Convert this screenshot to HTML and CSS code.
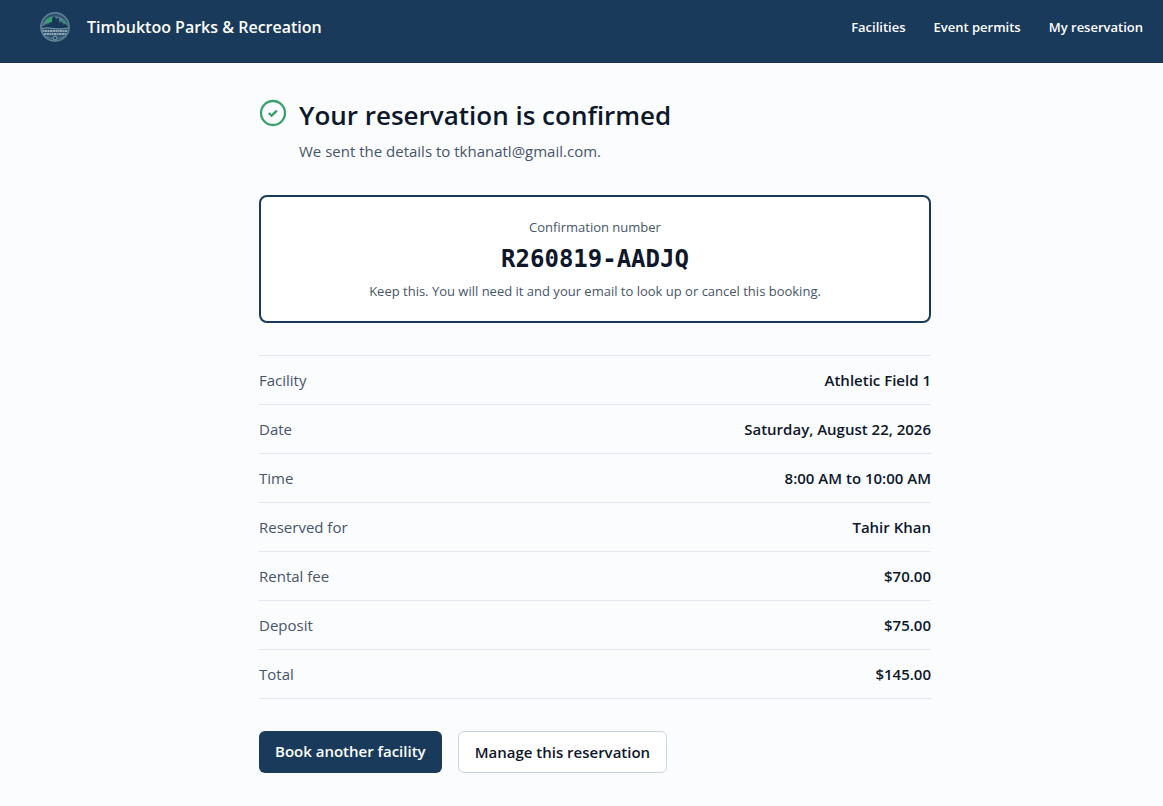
FILE: index.html
```html
<!DOCTYPE html>
<html lang="en">
<head>
  <meta charset="utf-8">
  <meta name="viewport" content="width=device-width, initial-scale=1">
  <title>Your reservation is confirmed</title>
  <link rel="stylesheet" href="styles.css">
</head>
<body>
  <header class="site-header">
    <a class="brand" href="#">
      <svg class="brand-logo" viewBox="0 0 60 60" aria-hidden="true">
        <circle cx="30" cy="30" r="30" fill="#55758f"/>
        <circle cx="30" cy="30" r="27" fill="#31536f"/>
        <path d="M4 28a27 27 0 0 1 52 0l-5-4-6-3-7-3-8-4-7 3-7 4-6 5z" fill="#5f8094"/>
        <path d="M13 16l6-5 7-2 1 5-4 6-6 3-5-1z" fill="#35a36d"/>
        <path d="M43 13l5 2 5 7-5 1-5-4z" fill="#348d70"/>
        <path d="M4 32l8-8 4 2 4-6 4 3V13l4-5 4 5 1 8v-9h5v11l5-4 3 7 5-2 5 8z" fill="#173856"/>
        <path d="M4 34c8-4 15-2 22-1s17 2 30-1" fill="none" stroke="#7f9cae" stroke-width="2"/>
        <path d="M5 38h50M8 44h44" fill="none" stroke="#8fa6b5" stroke-width="4" stroke-dasharray="4 1 5 1 3 1"/>
        <path d="M12 49q18 9 36 0" fill="none" stroke="#557a92" stroke-width="2"/>
        <circle cx="30" cy="52" r="4" fill="#24496a" stroke="#7f9cae" stroke-width="2"/>
        <circle cx="30" cy="30" r="28" fill="none" stroke="#64849a" stroke-width="2"/>
      </svg>
      <span>Timbuktoo Parks &amp; Recreation</span>
    </a>
    <nav class="site-nav">
      <a href="#">Facilities</a>
      <a href="#">Event permits</a>
      <a href="#">My reservation</a>
    </nav>
  </header>

  <main class="page">
    <div class="content">
      <div class="confirmed">
        <svg class="check" viewBox="0 0 28 28" fill="none" stroke="#38a169" aria-hidden="true">
          <circle cx="14" cy="14" r="12" stroke-width="2.3"/>
          <path d="M9.7 14l2.9 2.7 5.3-5.1" stroke-width="2.3"/>
        </svg>
        <div>
          <h1>Your reservation is confirmed</h1>
          <p>We sent the details to tkhanatl@gmail.com.</p>
        </div>
      </div>

      <section class="number-card">
        <p>Confirmation number</p>
        <p class="number">R260819-AADJQ</p>
        <p>Keep this. You will need it and your email to look up or cancel this booking.</p>
      </section>

      <dl class="details">
        <div class="row"><dt>Facility</dt><dd>Athletic Field 1</dd></div>
        <div class="row"><dt>Date</dt><dd>Saturday, August 22, 2026</dd></div>
        <div class="row"><dt>Time</dt><dd>8:00 AM to 10:00 AM</dd></div>
        <div class="row"><dt>Reserved for</dt><dd>Tahir Khan</dd></div>
        <div class="row"><dt>Rental fee</dt><dd>$70.00</dd></div>
        <div class="row"><dt>Deposit</dt><dd>$75.00</dd></div>
        <div class="row"><dt>Total</dt><dd>$145.00</dd></div>
      </dl>

      <div class="actions">
        <a class="btn btn-primary" href="#">Book another facility</a>
        <a class="btn" href="#">Manage this reservation</a>
      </div>
    </div>
  </main>
</body>
</html>
```

FILE: styles.css
```css
* {
  box-sizing: border-box;
}

body {
  margin: 0;
  background: #fafcfe;
  color: #0f172a;
  font-family: "Segoe UI", "Open Sans", "Noto Sans", sans-serif;
  font-size: 15px;
  line-height: 24px;
}

h1, p, dl, dd {
  margin: 0;
}

a {
  color: inherit;
  text-decoration: none;
}

.site-header {
  display: flex;
  align-items: center;
  justify-content: space-between;
  padding: 8px 20px 16px 40px;
  border-bottom: 1px solid #17324f;
  background: #1a3a5c;
  color: #fff;
  font-weight: 600;
}

.brand {
  display: flex;
  align-items: center;
  gap: 17px;
  height: 38px;
  font-size: 16px;
}

.brand-logo {
  width: 30px;
  height: 30px;
}

.site-nav {
  display: flex;
  gap: 28px;
  font-size: 13px;
}

.page {
  padding: 32px 0 32px 27px;
}

.content {
  max-width: 672px;
  margin: 0 auto;
}

.confirmed {
  display: flex;
  gap: 12px;
  color: #475569;
}

.check {
  flex: none;
  width: 28px;
  height: 28px;
  margin-top: 4px;
}

.confirmed h1 {
  color: #0f172a;
  font-size: 26px;
  font-weight: 600;
  line-height: 40px;
}

.confirmed p {
  margin-top: 4px;
}

.number-card {
  margin: 32px 0;
  padding: 20px;
  border: 2px solid #1a3a5c;
  border-radius: 8px;
  background: #fff;
  color: #475569;
  font-size: 13px;
  line-height: 20px;
  text-align: center;
}

.number-card .number {
  margin: 4px 0;
  color: #0f172a;
  font-family: "DejaVu Sans Mono", monospace;
  font-size: 24px;
  font-weight: 700;
  line-height: 36px;
}

.details {
  border-top: 1px solid #e2e8f0;
}

.row {
  display: flex;
  justify-content: space-between;
  gap: 16px;
  padding: 12px 0;
  border-bottom: 1px solid #e2e8f0;
}

.row dt {
  color: #475569;
}

.row dd {
  font-weight: 600;
  text-align: right;
}

.actions {
  display: flex;
  flex-wrap: wrap;
  gap: 16px;
  margin-top: 32px;
}

.btn {
  padding: 8px 16px;
  border: 1px solid #cbd5e1;
  border-radius: 6px;
  background: #fff;
  font-weight: 600;
}

.btn-primary {
  border: 0;
  background: #1a3a5c;
  color: #fff;
}
```
